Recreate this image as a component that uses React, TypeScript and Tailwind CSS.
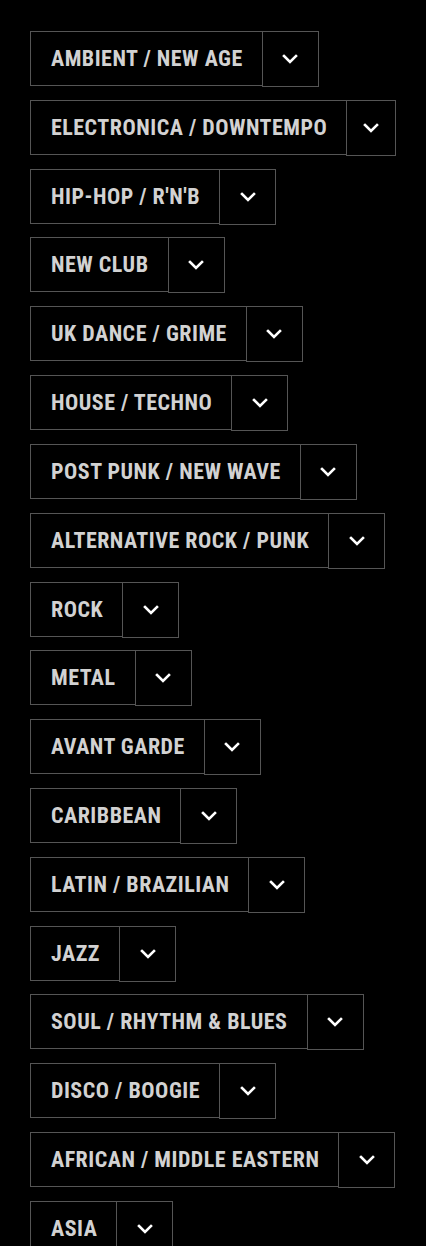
const genres = [
  'AMBIENT / NEW AGE',
  'ELECTRONICA / DOWNTEMPO',
  "HIP-HOP / R'N'B",
  'NEW CLUB',
  'UK DANCE / GRIME',
  'HOUSE / TECHNO',
  'POST PUNK / NEW WAVE',
  'ALTERNATIVE ROCK / PUNK',
  'ROCK',
  'METAL',
  'AVANT GARDE',
  'CARIBBEAN',
  'LATIN / BRAZILIAN',
  'JAZZ',
  'SOUL / RHYTHM & BLUES',
  'DISCO / BOOGIE',
  'AFRICAN / MIDDLE EASTERN',
  'ASIA',
]

function Chevron() {
  return (
    <svg width="16" height="10" viewBox="0 0 16 10" fill="none">
      <polyline points="2,2 8,8 14,2" stroke="#ffffff" strokeWidth="2.6" strokeLinecap="square" />
    </svg>
  )
}

function GenreRow({ name }: { name: string }) {
  return (
    <div className="flex items-start mb-[12.82px]">
      <a
        href="#"
        className="h-[55px] flex items-center pl-5 pr-[19px] border border-[#555] text-[#d2d2d2] text-[22px] font-bold tracking-[0.5px] whitespace-nowrap"
      >
        {name}
      </a>
      <button className="-ml-px h-[56px] w-[57px] flex items-center justify-center border border-[#555] bg-black">
        <Chevron />
      </button>
    </div>
  )
}

export default function App() {
  return (
    <div
      className="bg-black min-h-screen pt-[31px] px-[30px] overflow-hidden"
      style={{ fontFamily: '"Roboto Condensed", "DejaVu Sans Condensed", sans-serif' }}
    >
      {genres.map((g) => (
        <GenreRow key={g} name={g} />
      ))}
    </div>
  )
}
